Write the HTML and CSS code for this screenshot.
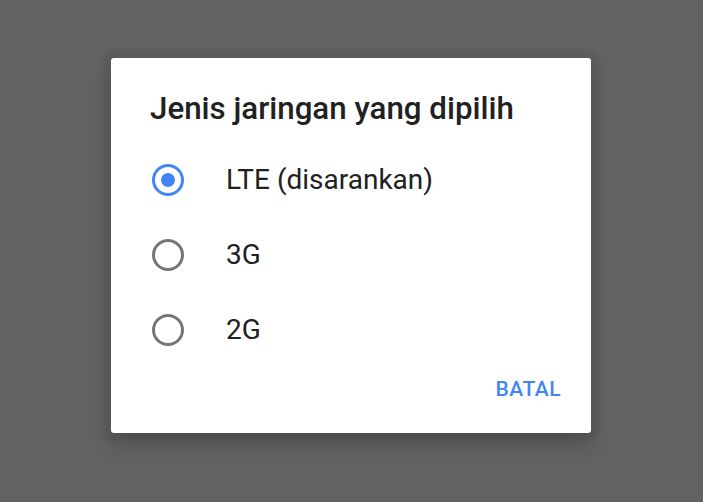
FILE: index.html
```html
<!DOCTYPE html>
<html lang="id">
<head>
    <meta charset="UTF-8">
    <meta name="viewport" content="width=device-width, initial-scale=1.0">
    <title>Jenis jaringan</title>
    <link rel="stylesheet" href="styles.css">
</head>
<body>
    <div class="screen">
        <div class="dialog">
            <h1 class="title">Jenis jaringan yang dipilih</h1>
            <div class="options">
                <label class="option">
                    <span class="radio checked"></span>
                    <span class="label">LTE (disarankan)</span>
                </label>
                <label class="option">
                    <span class="radio"></span>
                    <span class="label">3G</span>
                </label>
                <label class="option">
                    <span class="radio"></span>
                    <span class="label">2G</span>
                </label>
            </div>
            <div class="actions">
                <button class="btn-text">BATAL</button>
            </div>
        </div>
    </div>
</body>
</html>
```

FILE: styles.css
```css
body {
    margin: 0;
    background-color: #626262;
    font-family: Roboto, "Liberation Sans", sans-serif;
}
.screen {
    height: 502px;
    padding: 58px 0 0 111px;
    box-sizing: border-box;
}
.dialog {
    width: 480px;
    height: 375px;
    background-color: #fff;
    border-radius: 3px;
    box-shadow: 0 12px 20px rgba(0, 0, 0, 0.16), 0 0 4px 8px rgba(0, 0, 0, 0.06);
    display: flex;
    flex-direction: column;
    box-sizing: border-box;
    padding: 33px 30px 0 39px;
}
.title {
    margin: 0;
    font-size: 31.3px;
    font-weight: 500;
    line-height: 36px;
    color: #212121;
}
.options {
    display: flex;
    flex-direction: column;
    margin-top: 15px;
}
.option {
    display: flex;
    align-items: center;
    height: 75px;
    gap: 42px;
    padding-left: 2px;
}
.radio {
    width: 26px;
    height: 26px;
    border: 3px solid #757575;
    border-radius: 50%;
    display: flex;
    align-items: center;
    justify-content: center;
    flex-shrink: 0;
}
.radio.checked {
    border-color: #4285f4;
}
.radio.checked::after {
    content: "";
    width: 14px;
    height: 14px;
    border-radius: 50%;
    background-color: #4285f4;
}
.label {
    font-size: 28px;
    color: #212121;
}
.actions {
    display: flex;
    justify-content: flex-end;
    margin-top: 10px;
}
.btn-text {
    background: none;
    border: none;
    padding: 0;
    font-family: Roboto, "Liberation Sans", sans-serif;
    font-size: 21px;
    font-weight: 500;
    line-height: 24px;
    letter-spacing: 0.5px;
    color: #4285f4;
    cursor: pointer;
}
```
